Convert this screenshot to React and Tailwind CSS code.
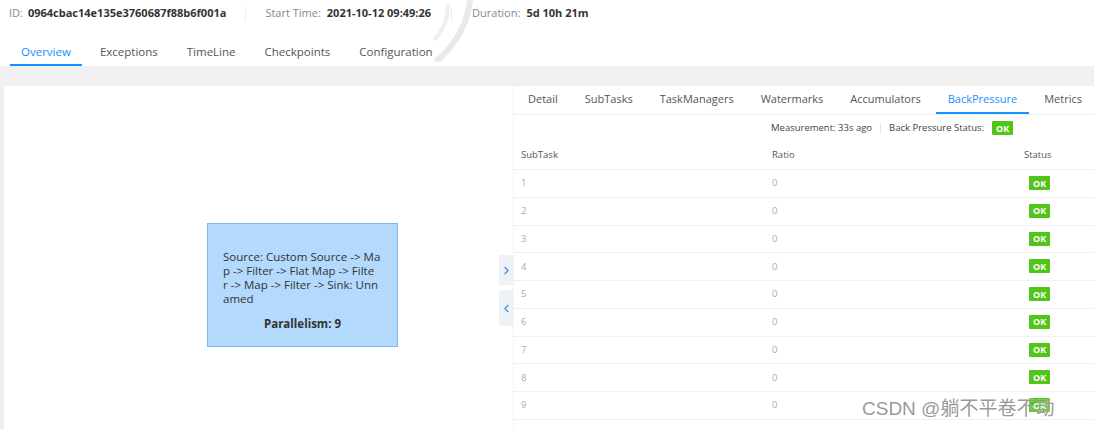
import { ChevronLeft, ChevronRight } from "lucide-react"

const jobTabs = ["Overview", "Exceptions", "TimeLine", "Checkpoints", "Configuration"]
const vertexTabs = ["Detail", "SubTasks", "TaskManagers", "Watermarks", "Accumulators", "BackPressure", "Metrics"]
const rows = [1, 2, 3, 4, 5, 6, 7, 8, 9]
const nodeLines = [
  "Source: Custom Source -> Ma",
  "p -> Filter -> Flat Map -> Filte",
  "r -> Map -> Filter -> Sink: Unn",
  "amed",
]

function OkBadge() {
  return (
    <span className="inline-flex items-center justify-center h-[14px] px-[4px] bg-[#52c41a] text-white text-[9px] font-bold leading-none rounded-[1px]">
      OK
    </span>
  )
}

export default function App() {
  return (
    <div className="relative w-[1094px] h-[429px] overflow-hidden bg-white text-[#333] font-['Open_Sans',sans-serif]">
      {/* Job header */}
      <div className="flex items-center h-[27px] pl-[9px] text-[11px]">
        <span className="text-[#888]">ID:</span>
        <span className="ml-[5px] font-bold text-[#333]">0964cbac14e135e3760687f88b6f001a</span>
        <span className="mx-[19px] w-px h-[14px] bg-[#eee]" />
        <span className="text-[#888]">Start Time:</span>
        <span className="ml-[6px] font-bold">2021-10-12 09:49:26</span>
        <span className="mx-[20px] w-px h-[14px] bg-[#eee]" />
        <span className="text-[#888]">Duration:</span>
        <span className="ml-[6px] font-bold">5d 10h 21m</span>
      </div>

      <svg className="absolute left-[430px] top-0" width="50" height="62" viewBox="0 0 50 62">
        <path d="M40 0 C 38 20, 30 40, 6 62" stroke="#e9e9e9" strokeWidth="6" fill="none" />
        <path d="M18 4 C 18 18, 14 30, 4 40" stroke="#efefef" strokeWidth="4" fill="none" />
      </svg>

      <div className="flex items-end h-[39px] pl-[10px]">
        {jobTabs.map((t, i) => (
          <div
            key={t}
            className={
              "px-[11px] mr-[7px] pb-[4px] border-b-2 text-[11.5px] " +
              (i === 0 ? "border-[#1890ff] text-[#1890ff]" : "border-transparent text-[#555]")
            }
          >
            {t}
          </div>
        ))}
      </div>

      {/* Body */}
      <div className="flex h-[363px] bg-[#f0f0f0] pt-[20px] pl-[4px]">
        <div className="relative w-[493px] shrink-0 bg-white">
          <div className="absolute left-[203px] top-[137px] w-[191px] h-[124px] bg-[#b3d9fc] border border-[#7fb7ec] pl-[15px] pt-[26px] text-[11.5px] leading-[14px] text-[#333]">
            {nodeLines.map((l) => (
              <div key={l} className="whitespace-nowrap">
                {l}
              </div>
            ))}
            <p className="mt-[11px] pr-[15px] text-center font-bold">Parallelism: 9</p>
          </div>
        </div>

        <div className="flex flex-col w-[16px] shrink-0 bg-white pt-[169px] gap-[5px]">
          <div className="flex items-center justify-center h-[30px] ml-[2px] bg-[#eef2f6]">
            <ChevronRight size={13} strokeWidth={2} className="text-[#3d8fe0]" />
          </div>
          <div className="flex items-center justify-center h-[36px] ml-[2px] bg-[#eef2f6]">
            <ChevronLeft size={13} strokeWidth={2} className="text-[#3d8fe0]" />
          </div>
        </div>

        <div className="flex-1 min-w-0 bg-white border-l border-[#f3f3f3]">
          <div className="flex h-[29px] pl-[2px] border-b border-[#f0f0f0] text-[11px] whitespace-nowrap">
            {vertexTabs.map((t) => (
              <div
                key={t}
                className={
                  "flex items-center px-[12px] mr-[3px] border-b-2 " +
                  (t === "BackPressure" ? "border-[#1890ff] text-[#1890ff]" : "border-transparent text-[#555]")
                }
              >
                {t}
              </div>
            ))}
          </div>

          <div className="flex items-center h-[27px] pl-[257px] text-[9.5px] text-[#444]">
            <span>Measurement: 33s ago</span>
            <span className="mx-[8px] w-px h-[11px] bg-[#e6e6e6]" />
            <span>Back Pressure Status:</span>
            <span className="ml-[8px]">
              <OkBadge />
            </span>
          </div>

          <div className="grid grid-cols-[251px_252px_1fr] items-center h-[28px] border-b border-[#f0f0f0] text-[9.5px] text-[#555]">
            <div className="pl-[7px]">SubTask</div>
            <div className="pl-[7px]">Ratio</div>
            <div className="pl-[7px]">Status</div>
          </div>

          {rows.map((r) => (
            <div
              key={r}
              className="grid grid-cols-[251px_252px_1fr] items-center h-[27.75px] border-b border-[#f0f0f0] text-[9.5px] text-[#aaa]"
            >
              <div className="pl-[7px]">{r}</div>
              <div className="pl-[7px]">0</div>
              <div className="pl-[12px]">
                <OkBadge />
              </div>
            </div>
          ))}
        </div>
      </div>

      <div className="absolute left-[862px] top-[397px] text-[19px] leading-[24px] text-[#8c8c8c]/90 font-['Liberation_Sans','Noto_Sans_CJK_SC',sans-serif] [text-shadow:0_0_2px_#fff]">
        CSDN @躺不平卷不动
      </div>
    </div>
  )
}
